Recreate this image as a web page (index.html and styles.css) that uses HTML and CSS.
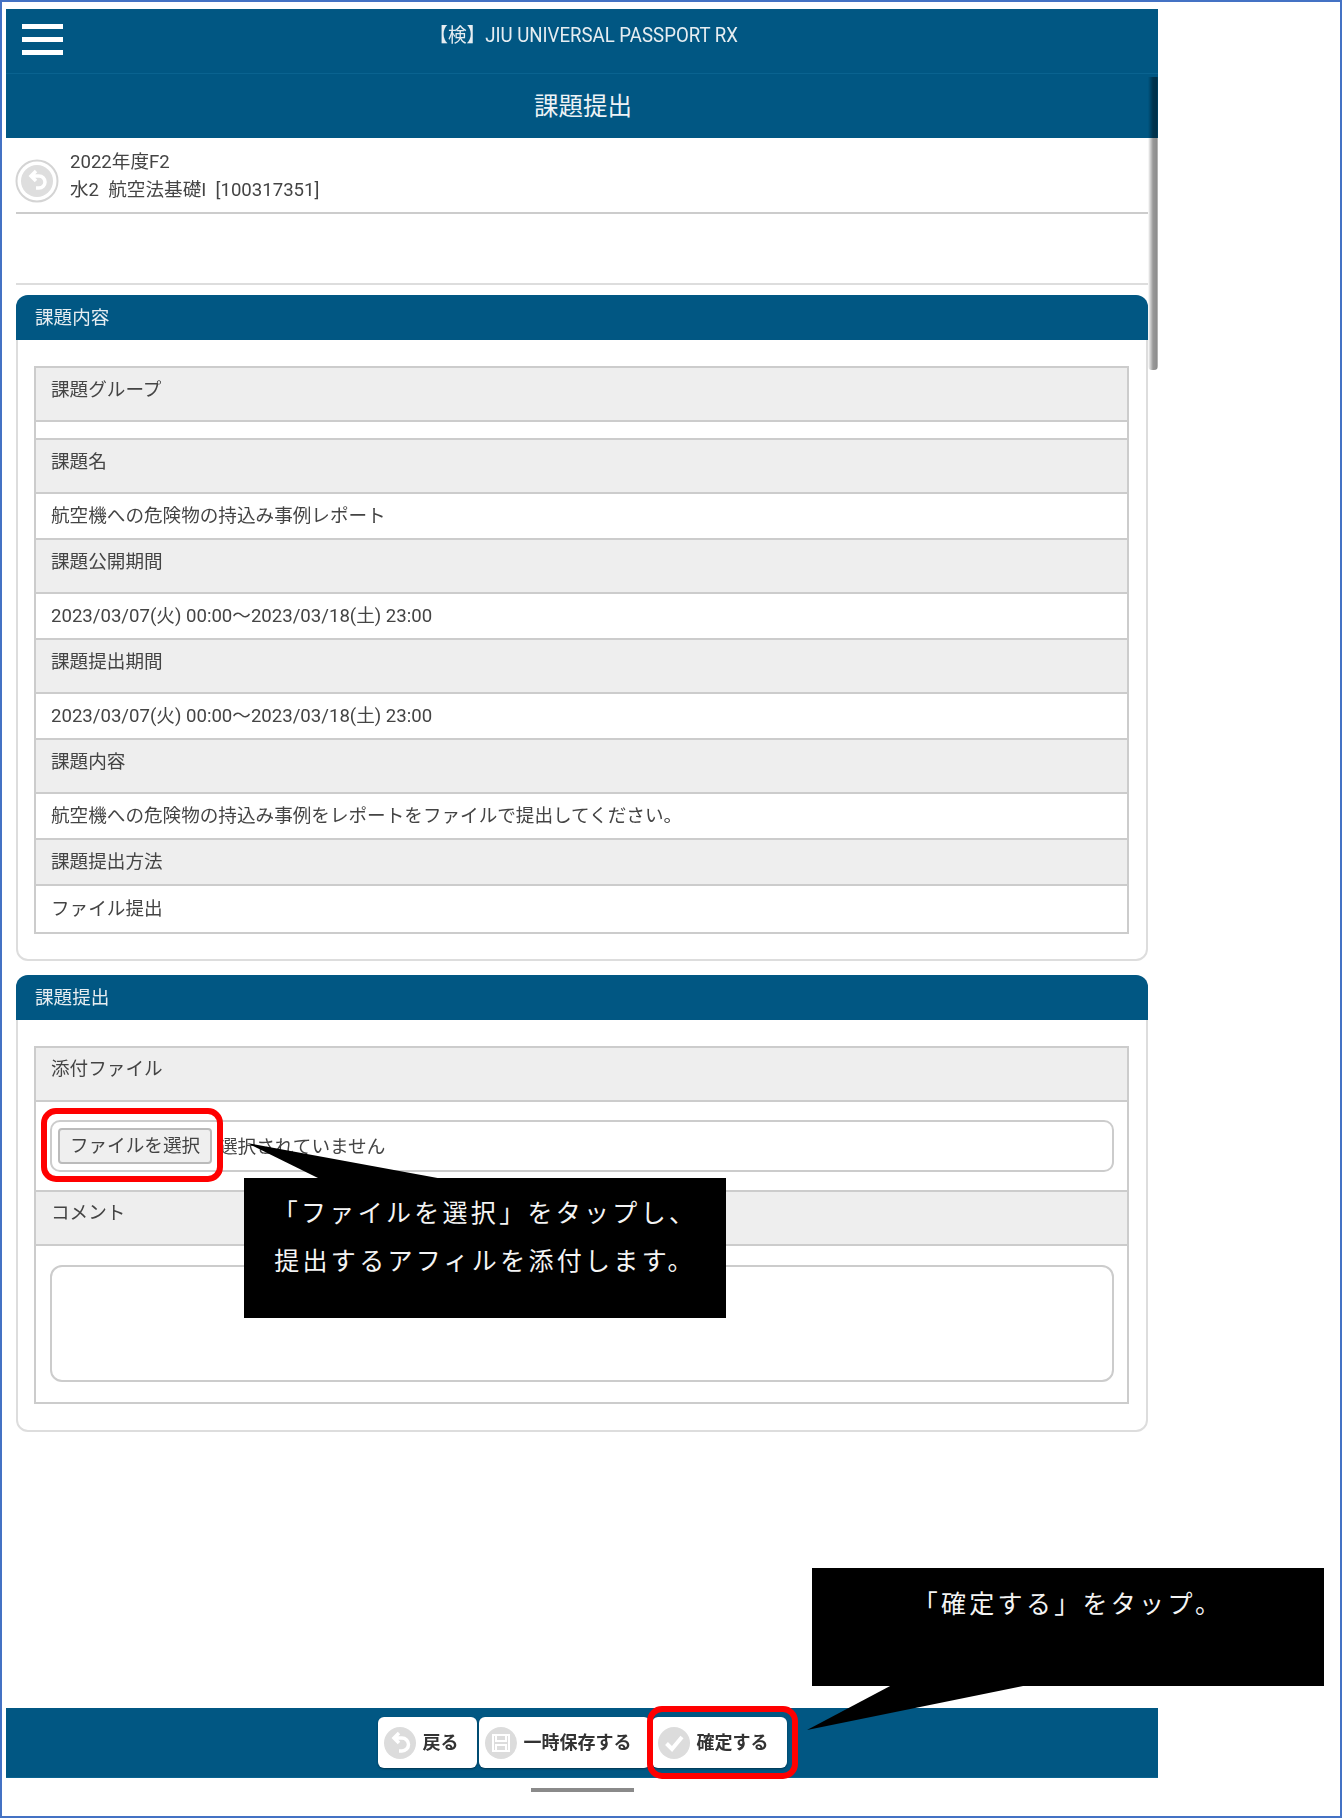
FILE: index.html
```html
<!DOCTYPE html>
<html lang="ja">
<head>
<meta charset="utf-8">
<title>課題提出</title>
<link rel="stylesheet" href="styles.css">
</head>
<body>
<div class="frame">
  <div class="app">
    <header class="topbar">
      <div class="burger"><span></span><span></span><span></span></div>
      <div class="system">【検】JIU UNIVERSAL PASSPORT RX</div>
    </header>
    <div class="pagetitle">課題提出</div>
    <main class="content">
      <div class="course">
        <svg class="back-round" viewBox="0 0 44 46" aria-hidden="true">
          <circle cx="22" cy="23" r="20.500" fill="#fff" stroke="#d4d4d4" stroke-width="2"/>
          <circle cx="22" cy="23" r="16" fill="#dedede"/>
          <path d="M21 13l-5 5 5 5M16.500 18H24a6 6 0 0 1 0 12h-3" fill="none" stroke="#fff" stroke-width="3.500"/>
        </svg>
        <div class="course-text">
          <div>2022年度F2</div>
          <div>水2&nbsp; 航空法基礎I&nbsp; [100317351]</div>
        </div>
      </div>
      <div class="spacer"></div>

      <section class="panel panel-first">
        <h2 class="panel-head">課題内容</h2>
        <div class="panel-body">
          <div class="sheet">
            <div class="label">課題グループ</div>
            <div class="value value-empty"></div>
            <div class="label">課題名</div>
            <div class="value">航空機への危険物の持込み事例レポート</div>
            <div class="label">課題公開期間</div>
            <div class="value">2023/03/07(火) 00:00～2023/03/18(土) 23:00</div>
            <div class="label">課題提出期間</div>
            <div class="value">2023/03/07(火) 00:00～2023/03/18(土) 23:00</div>
            <div class="label">課題内容</div>
            <div class="value">航空機への危険物の持込み事例をレポートをファイルで提出してください。</div>
            <div class="label label-short">課題提出方法</div>
            <div class="value value-tall">ファイル提出</div>
          </div>
        </div>
      </section>

      <section class="panel panel-second">
        <h2 class="panel-head">課題提出</h2>
        <div class="panel-body">
          <div class="sheet">
            <div class="label label-form">添付ファイル</div>
            <div class="value value-file">
              <div class="filebox">
                <button class="filebtn" type="button">ファイルを選択</button>
                <span class="filename">選択されていません</span>
              </div>
            </div>
            <div class="label label-form">コメント</div>
            <div class="value value-comment">
              <div class="commentbox"></div>
            </div>
          </div>
        </div>
      </section>
    </main>
    <footer class="actionbar">
      <button class="action" type="button">
        <svg class="action-icon" viewBox="0 0 32 32" aria-hidden="true">
          <circle cx="16" cy="16" r="16" fill="#dcdcdc"/>
          <path d="M15 6l-5 5 5 5M10.500 11H18a6.500 6.500 0 0 1 0 13h-3" fill="none" stroke="#fff" stroke-width="3.500"/>
        </svg>
        <span class="action-label">戻る</span>
      </button>
      <button class="action" type="button">
        <svg class="action-icon" viewBox="0 0 32 32" aria-hidden="true">
          <circle cx="16" cy="16" r="16" fill="#dcdcdc"/>
          <path d="M8 8h16v16H8z" fill="none" stroke="#fff" stroke-width="2"/>
          <path d="M11 8v6h10V8M11 24v-6h10v6" fill="none" stroke="#fff" stroke-width="2"/>
        </svg>
        <span class="action-label">一時保存する</span>
      </button>
      <button class="action" type="button">
        <svg class="action-icon" viewBox="0 0 32 32" aria-hidden="true">
          <circle cx="16" cy="16" r="16" fill="#dcdcdc"/>
          <path d="M8.500 16.500l5.500 5.500 10-12" fill="none" stroke="#fff" stroke-width="4"/>
        </svg>
        <span class="action-label">確定する</span>
      </button>
    </footer>
    <div class="homebar"></div>
  </div>

  <div class="scroll-thumb"></div>
  <div class="ring ring-file"></div>
  <div class="ring ring-confirm"></div>

  <div class="note note-file">
    <svg class="tail" width="10" height="10" aria-hidden="true"><path d="M3 -35L76 1H199Z" fill="#000"/></svg>
    <p>「ファイルを選択」をタップし、</p>
    <p>提出するアフィルを添付します。</p>
  </div>
  <div class="note note-confirm">
    <svg class="tail" width="10" height="10" aria-hidden="true"><path d="M-5 162L80 117H216Z" fill="#000"/></svg>
    <p>「確定する」をタップ。</p>
  </div>
</div>
</body>
</html>
```

FILE: styles.css
```css
* { box-sizing: border-box; }

html, body { margin: 0; padding: 0; background: #fff; }

body {
  font-family: Roboto, "Noto Sans CJK JP", "Noto Sans", sans-serif;
  color: #444;
  font-size: 18.600px;
  line-height: 28px;
}

.frame {
  position: relative;
  width: 1342px;
  height: 1818px;
  border: 2px solid #4472c4;
  padding: 7px 0 0 4px;
  background: #fff;
}

.app {
  width: 1152px;
  height: 1783px;
  display: flex;
  flex-direction: column;
  filter: blur(0.6px);
}

.topbar {
  flex: none;
  height: 65px;
  background: #015783;
  display: grid;
  grid-template-columns: 1fr auto 1fr;
  align-items: start;
  padding-top: 15px;
  border-bottom: 1px solid #0a6390;
}

.burger {
  margin-left: 16px;
  width: 41px;
  display: flex;
  flex-direction: column;
  gap: 8px;
}

.burger span {
  height: 5px;
  background: #fff;
}

.system {
  color: #e6edf1;
  font-size: 19.500px;
  line-height: 20px;
  margin: 2px 0 0 4px;
  transform: scaleX(0.955);
}

.pagetitle {
  flex: none;
  height: 64px;
  background: #015783;
  color: #eef3f6;
  font-size: 24.500px;
  line-height: 65px;
  text-align: center;
  padding-left: 2px;
}

.content {
  flex: 1;
  padding: 0 10px;
}

.course {
  height: 76px;
  display: flex;
  align-items: center;
  gap: 11px;
  border-bottom: 2px solid #ccc;
  padding-top: 2px;
}

.back-round {
  width: 44px;
  height: 46px;
  margin: 10px 0 0 -1px;
}

.spacer {
  height: 71px;
  border-bottom: 2px solid #ddd;
}

.panel {
  border: 2px solid #ddd;
  border-radius: 12px;
  background: #fff;
}

.panel-first { margin-top: 10px; height: 666px; }

.panel-second { margin-top: 14px; height: 457px; }

.panel-head {
  margin: -2px -2px 0;
  height: 45px;
  background: #015783;
  border-radius: 12px 12px 0 0;
  color: #e6edf1;
  font-size: 18.600px;
  font-weight: 400;
  line-height: 46px;
  padding-left: 19px;
}

.panel-body { padding: 26px 17px 0 16px; }

.sheet {
  border: 2px solid #ccc;
  border-bottom-width: 0;
}

.label {
  height: 54px;
  background: #eee;
  border-bottom: 2px solid #ccc;
  padding: 8px 13px 0 15px;
}

.label-form { padding-top: 7px; }

.label-short {
  height: 46px;
  padding-top: 8px;
}

.value {
  height: 46px;
  border-bottom: 2px solid #ccc;
  padding: 0 13px 1px 15px;
  display: flex;
  align-items: center;
}

.value-empty { height: 18px; padding-bottom: 0; }

.value-tall { height: 48px; }

.value-file { height: 90px; padding: 0 13px 0 14px; }

.value-comment {
  height: 158px;
  padding: 0 13px 2px 14px;
}

.filebox {
  flex: 1;
  height: 52px;
  border: 2px solid #ccc;
  border-radius: 10px;
  display: flex;
  align-items: center;
  padding-left: 6px;
  gap: 7px;
}

.filebtn {
  width: 154px;
  height: 36px;
  padding: 0;
  background: #efefef;
  border: 2px solid #bbb;
  border-radius: 4px;
  color: #444;
  font: inherit;
}

.filename { margin-top: 2px; }

.commentbox {
  flex: 1;
  height: 117px;
  border: 2px solid #ccc;
  border-radius: 12px;
}

.actionbar {
  flex: none;
  height: 70px;
  background: #015783;
  border-bottom: 1px solid #0a6390;
  display: flex;
  justify-content: center;
  align-items: flex-start;
  gap: 2px;
  padding-top: 9px;
}

.action {
  height: 51px;
  display: flex;
  align-items: center;
  gap: 7px;
  padding: 0 18px 0 6px;
  background: #fff;
  border: 0;
  border-radius: 6px;
  color: #333;
  font-family: inherit;
  font-size: 18px;
  font-weight: 700;
  box-shadow: 0 1px 2px rgba(0, 0, 0, 0.4);
}

.action-icon { width: 32px; height: 32px; flex: none; }

.action-label { margin-top: -4px; }

.homebar {
  flex: none;
  width: 103px;
  height: 4px;
  margin: 10px auto 0;
  background: #8a8a8a;
}

.scroll-thumb {
  position: absolute;
  left: 1146px;
  top: 75px;
  width: 10px;
  height: 293px;
  background: linear-gradient(to right, rgba(0, 0, 0, 0), rgba(0, 0, 0, 0.4) 50%, rgba(0, 0, 0, 0.45) 90%, rgba(0, 0, 0, 0.15));
  border-radius: 0 0 4px 4px;
}

.ring {
  position: absolute;
  border: 6px solid #f00;
  border-radius: 15px;
}

.ring-file { left: 39px; top: 1106px; width: 182px; height: 74px; }

.ring-confirm { left: 645px; top: 1704px; width: 151px; height: 73px; }

.note {
  position: absolute;
  background: #000;
  color: #f4f4f4;
  text-align: center;
  font-family: "Noto Sans CJK JP", sans-serif;
  letter-spacing: 3.300px;
  font-size: 25px;
  font-weight: 400;
}

.note p { margin: 0; }

.note-file {
  left: 242px;
  top: 1176px;
  width: 482px;
  height: 140px;
  padding-top: 9px;
  line-height: 48px;
}

.note-confirm {
  left: 810px;
  top: 1566px;
  width: 512px;
  height: 118px;
  padding-top: 13px;
  line-height: 42px;
}

.tail {
  position: absolute;
  left: 0;
  top: 0;
  overflow: visible;
}
```
